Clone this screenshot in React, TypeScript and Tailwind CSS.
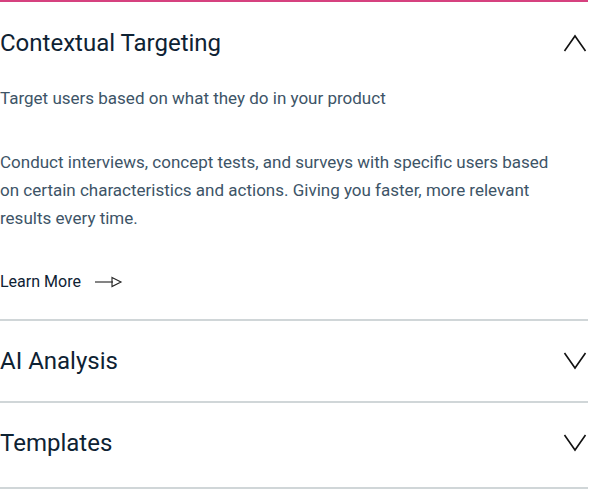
import React from "react";

const Chevron = ({ up }: { up?: boolean }) => (
  <svg width="24" height="20" viewBox="0 0 24 20" fill="none" className="shrink-0">
    {up ? (
      <polyline points="1.5,18 12,3 22.5,18" stroke="#111" strokeWidth="1.6" />
    ) : (
      <polyline points="1.5,2 12,17 22.5,2" stroke="#111" strokeWidth="1.6" />
    )}
  </svg>
);

const Arrow = () => (
  <svg width="28" height="12" viewBox="0 0 28 12" fill="none">
    <line x1="0" y1="6" x2="18" y2="6" stroke="#333" strokeWidth="1.2" />
    <polygon points="17,1.5 26,6 17,10.5" stroke="#222" strokeWidth="1.1" fill="none" />
  </svg>
);

export default function App() {
  return (
    <div className="w-[588px] bg-white" style={{ fontFamily: "Roboto, 'Liberation Sans', sans-serif" }}>
      <div className="border-t-2 border-[#d6417f]">
        <div className="flex h-[82px] items-center justify-between pr-[1px]">
          <h3 className="text-[24px] font-normal text-[#0e2233]">Contextual Targeting</h3>
          <Chevron up />
        </div>
        <div className="pb-[25px] text-[17px] leading-[28px] text-[#3d5467]">
          <p>Target users based on what they do in your product</p>
          <p className="mt-[36px] max-w-[556px]">
            Conduct interviews, concept tests, and surveys with specific users based on certain characteristics and actions. Giving you faster, more relevant results every time.
          </p>
          <a className="mt-[38px] flex h-[24px] items-center gap-[14px] text-[16px] text-[#0e2233]">
            Learn More
            <Arrow />
          </a>
        </div>
      </div>
      <div className="border-t-2 border-[#d0d6d8]">
        <div className="flex h-[80px] items-center justify-between pr-[1px]">
          <h3 className="text-[24px] font-normal text-[#0e2233]">AI Analysis</h3>
          <Chevron />
        </div>
      </div>
      <div className="border-t-2 border-b-2 border-[#d0d6d8] pb-[4px]">
        <div className="flex h-[80px] items-center justify-between pr-[1px]">
          <h3 className="text-[24px] font-normal text-[#0e2233]">Templates</h3>
          <Chevron />
        </div>
      </div>
    </div>
  );
}
